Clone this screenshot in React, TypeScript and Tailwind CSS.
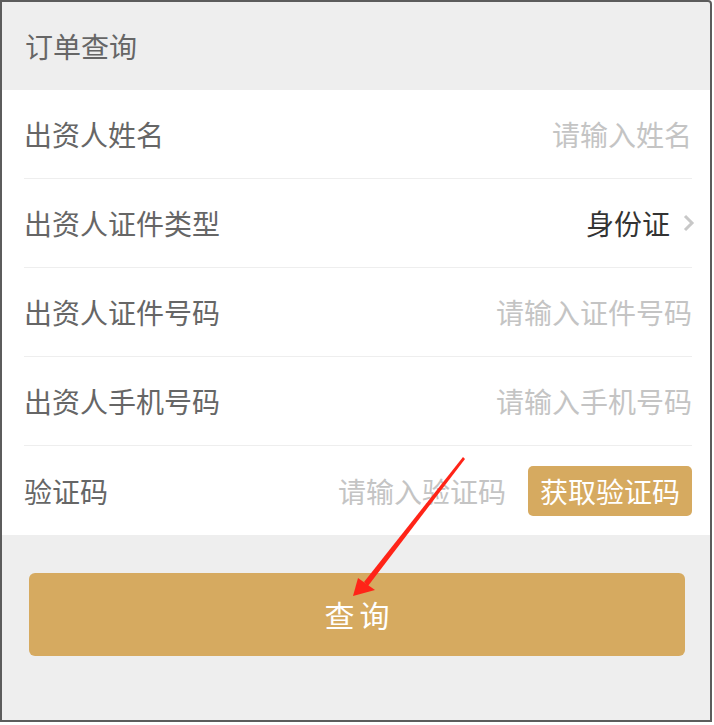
const rows = [
  { label: "出资人姓名", placeholder: "请输入姓名" },
  { label: "出资人证件类型", value: "身份证" },
  { label: "出资人证件号码", placeholder: "请输入证件号码" },
  { label: "出资人手机号码", placeholder: "请输入手机号码" },
];

const font = { fontFamily: '"Noto Sans CJK SC", "Noto Sans", sans-serif' };

export default function App() {
  return (
    <div
      className="relative w-[712px] h-[722px] border-2 border-[#5c5c5c] rounded-tr-[4px] bg-[#eeeeee] flex flex-col overflow-hidden"
      style={font}
    >
      <div className="h-[88px] flex items-center pl-[23px] text-[28px] text-[#666666]">
        订单查询
      </div>

      <div className="bg-white pl-[22px] pr-[18px]">
        {rows.map((row, i) => (
          <div
            key={i}
            className="h-[89px] flex items-center justify-between border-b border-[#eeeeee] text-[28px]"
          >
            <span className="text-[#666666]">{row.label}</span>
            {row.placeholder ? (
              <span className="text-[#c4c4c4]">{row.placeholder}</span>
            ) : (
              <span className="flex items-center text-[#333333]">
                {row.value}
                {/* chevron */}
                <svg width="12" height="20" viewBox="0 0 12 20" className="ml-[13px] -mr-[3px]">
                  <polyline points="2,3 9,10 2,17" fill="none" stroke="#c8c8c8" strokeWidth="3" />
                </svg>
              </span>
            )}
          </div>
        ))}
        <div className="h-[89px] flex items-center justify-between text-[28px]">
          <span className="text-[#666666]">验证码</span>
          <div className="flex items-center">
            <span className="text-[#c4c4c4] mr-[22px]">请输入验证码</span>
            <button className="h-[50px] px-[12px] rounded-[5px] bg-[#d6aa60] text-white text-[28px]">
              获取验证码
            </button>
          </div>
        </div>
      </div>

      <div className="pt-[38px] pl-[27px] pr-[25px]">
        <button className="w-full h-[83px] rounded-[6px] bg-[#d6aa60] text-white text-[30px] tracking-[5px] pl-[5px]">
          查询
        </button>
      </div>

      {/* red annotation arrow */}
      <svg
        className="absolute inset-0 pointer-events-none"
        width="712"
        height="722"
        viewBox="0 0 712 722"
      >
        <polygon points="461,455 463,457 366,584 362,580" fill="#ff2418" />
        <polygon points="351,594 356,576 373,588" fill="#ff2418" />
      </svg>
    </div>
  );
}
